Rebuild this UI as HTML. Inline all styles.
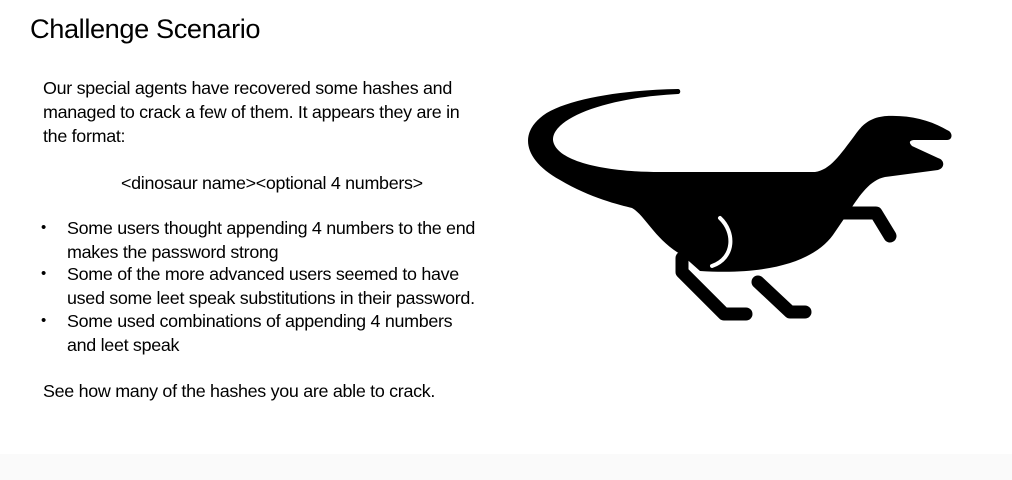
<!DOCTYPE html>
<html><head><meta charset="utf-8"><style>
body{margin:0;width:1012px;height:480px;background:#fff;overflow:hidden;position:relative;font-family:"Liberation Sans",sans-serif;color:#000}
.t{position:absolute;white-space:nowrap;font-size:17.9px;line-height:20px;letter-spacing:-0.3px}
h1{position:absolute;left:30px;top:13px;margin:0;font-weight:normal;font-size:27.2px;letter-spacing:-0.4px}
.b{position:absolute;left:41px;font-size:15px}
</style></head><body>
<h1>Challenge Scenario</h1>
<div class="t" style="left:43px;top:78px">Our special agents have recovered some hashes and</div>
<div class="t" style="left:43px;top:102px">managed to crack a few of them. It appears they are in</div>
<div class="t" style="left:43px;top:126px">the format:</div>
<div class="t" style="left:121px;top:173px">&lt;dinosaur name&gt;&lt;optional 4 numbers&gt;</div>
<div class="t b" style="top:218px">•</div>
<div class="t" style="left:67px;top:218px">Some users thought appending 4 numbers to the end</div>
<div class="t" style="left:67px;top:242px">makes the password strong</div>
<div class="t b" style="top:264px">•</div>
<div class="t" style="left:67px;top:264px">Some of the more advanced users seemed to have</div>
<div class="t" style="left:67px;top:288px">used some leet speak substitutions in their password.</div>
<div class="t b" style="top:311px">•</div>
<div class="t" style="left:67px;top:311px">Some used combinations of appending 4 numbers</div>
<div class="t" style="left:67px;top:335px">and leet speak</div>
<div class="t" style="left:43px;top:381px">See how many of the hashes you are able to crack.</div>
<svg width="1012" height="480" style="position:absolute;left:0;top:0">
<path d="M678,89 C620,90 560,100 540,118 C520,135 524,160 560,180 C590,198 620,205 632,208 C645,215 655,240 682,255 L700,271 C780,276 820,256 835,232 L850,210 C860,195 870,180 885,177 L938,170 C945,168 945,160 938,158 L912,146 C908,142 910,140 915,140 L947,140 C953,140 953,132 947,130 C930,120 910,115 887,116 C870,117 862,125 855,135 C840,155 830,170 815,172 L660,172 C600,172 555,160 553,140 C552,120 600,98 678,94 C681,94 681,89 678,89 Z" fill="#000"/>
<path d="M720,218 C735,232 735,258 712,266" stroke="#fff" stroke-width="4" fill="none" stroke-linecap="round"/>
<polyline points="682,258 682,272 724,314 746,314" stroke="#000" stroke-width="13" fill="none" stroke-linecap="round" stroke-linejoin="round"/>
<polyline points="758,282 790,312 805,312" stroke="#000" stroke-width="13" fill="none" stroke-linecap="round" stroke-linejoin="round"/>
<polyline points="840,213 876,213 890,236" stroke="#000" stroke-width="13" fill="none" stroke-linecap="round" stroke-linejoin="round"/>
</svg>
<div style="position:absolute;left:0;top:454px;width:1012px;height:26px;background:#fafafa"></div>
</body></html>
